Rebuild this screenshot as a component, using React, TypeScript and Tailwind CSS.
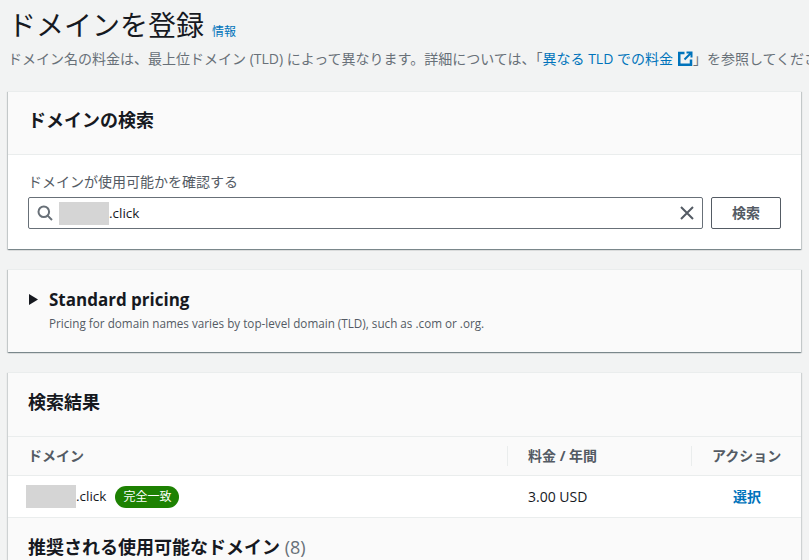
const font = { fontFamily: '"Open Sans", "Noto Sans CJK JP", sans-serif' };

const cardShadow = 'shadow-[0_1px_1px_0_rgba(0,28,36,0.3),1px_1px_1px_0_rgba(0,28,36,0.15),-1px_1px_1px_0_rgba(0,28,36,0.15)]';

const Redacted = () => <span className="inline-block w-[50px] h-[23px] bg-[#d5d5d5] shrink-0" />;

const ExternalIcon = () => (
  <svg viewBox="0 0 15 15" className="inline-block w-[15px] h-[15px] ml-[5px] align-[-2px]" fill="none" stroke="#0073bb">
    <path d="M6.5 2H1.25v11.75H13V8.5" strokeWidth="2.5" />
    <path d="M8.5 1.5H13.5V6.5M13.25 1.75L6.5 8.5" strokeWidth="2" />
  </svg>
);

const SearchIcon = () => (
  <svg viewBox="0 0 16 16" className="w-4 h-4 mr-[6px] shrink-0" fill="none" stroke="#687078" strokeWidth="2">
    <circle cx="6.8" cy="6.8" r="5.3" />
    <path d="M10.6 10.6L15 15" />
  </svg>
);

const ClearIcon = () => (
  <svg viewBox="0 0 14 14" className="w-[14px] h-[14px] ml-auto shrink-0" fill="none" stroke="#545b64" strokeWidth="2">
    <path d="M1 1l12 12M13 1L1 13" />
  </svg>
);

const App = () => {
  return (
    <div className="w-[809px] h-[560px] overflow-hidden bg-[#f2f3f3] text-[#16191f] flex flex-col" style={font}>
      <div className="pl-2 h-[91px] shrink-0">
        <div className="flex items-baseline h-[50px] pt-[2px]">
          <h1 className="text-[28px] leading-[46px] font-normal whitespace-nowrap">ドメインを登録</h1>
          <a className="ml-2 text-xs text-[#0073bb]">情報</a>
        </div>
        <p className="text-sm leading-[18px] text-[#687078] whitespace-nowrap">
          ドメイン名の料金は、最上位ドメイン (TLD) によって異なります。詳細については、「
          <a className="text-[#0073bb]">異なる TLD での料金<ExternalIcon /></a>
          」を参照してください。
        </p>
      </div>

      <section className={`mx-2 h-[158px] shrink-0 bg-white border-t border-t-[#eaeded] ${cardShadow}`}>
        <div className="h-[63px] px-5 pb-[6px] flex items-center bg-[#fafafa] border-b border-[#eaeded]">
          <h2 className="text-lg font-bold">ドメインの検索</h2>
        </div>
        <div className="px-5 pt-[17px]">
          <div className="text-sm leading-[20px] text-[#545b64] mb-[5px]">ドメインが使用可能かを確認する</div>
          <div className="flex gap-2">
            <div className="flex-1 h-8 flex items-center pl-[8px] pr-[8px] bg-white border border-[#687078] rounded-[2px]">
              <SearchIcon />
              <Redacted />
              <span className="text-[13.5px]">.click</span>
              <ClearIcon />
            </div>
            <button className="w-[70px] h-8 bg-white border border-[#545b64] rounded-[2px] text-sm font-bold text-[#545b64]">検索</button>
          </div>
        </div>
      </section>

      <section className={`mx-2 mt-5 h-[83px] shrink-0 bg-[#fafafa] border-t border-t-[#eaeded] pl-[21px] pr-5 pt-[18px] flex gap-[11px] ${cardShadow}`}>
        <svg viewBox="0 0 10 12" className="w-[9px] h-[11px] mt-[6px] shrink-0" fill="#16191f">
          <path d="M0 0l10 6L0 12z" />
        </svg>
        <div>
          <h2 className="text-[17px] leading-[24px] font-bold">Standard pricing</h2>
          <p className="text-[11.7px] leading-[18px] mt-[2px] text-[#545b64]">Pricing for domain names varies by top-level domain (TLD), such as .com or .org.</p>
        </div>
      </section>

      <section className="mx-2 mt-5 flex-1 bg-[#fafafa] border-t border-t-[#eaeded] shadow-[1px_1px_1px_0_rgba(0,28,36,0.15),-1px_1px_1px_0_rgba(0,28,36,0.15)]">
        <div className="h-[64px] px-5 pb-[5px] flex items-center border-b border-[#eaeded]">
          <h2 className="text-lg font-bold">検索結果</h2>
        </div>
        <div className="h-[39px] flex items-center text-sm font-bold text-[#545b64] border-b border-[#eaeded]">
          <div className="w-[499px] pl-5">ドメイン</div>
          <div className="w-[184px] pl-5 border-l border-[#eaeded]">料金 / 年間</div>
          <div className="flex-1 pl-5 border-l border-[#eaeded]">アクション</div>
        </div>
        <div className="h-[42px] flex items-center text-sm bg-white border-b border-[#eaeded]">
          <div className="w-[499px] pl-[18px] flex items-center">
            <Redacted />
            <span className="text-[13.5px]">.click</span>
            <span className="ml-[9px] h-[22px] px-2 flex items-center rounded-full bg-[#1d8102] text-white text-xs">完全一致</span>
          </div>
          <div className="w-[184px] pl-5 ml-px">3.00 USD</div>
          <div className="flex-1 pl-[41px] font-bold text-[#0073bb]">選択</div>
        </div>
        <div className="px-5 pt-[17px] text-lg leading-[24px] font-bold whitespace-nowrap">
          推奨される使用可能なドメイン <span className="font-normal text-[#687078]">(8)</span>
        </div>
      </section>
    </div>
  );
};

export default App;
